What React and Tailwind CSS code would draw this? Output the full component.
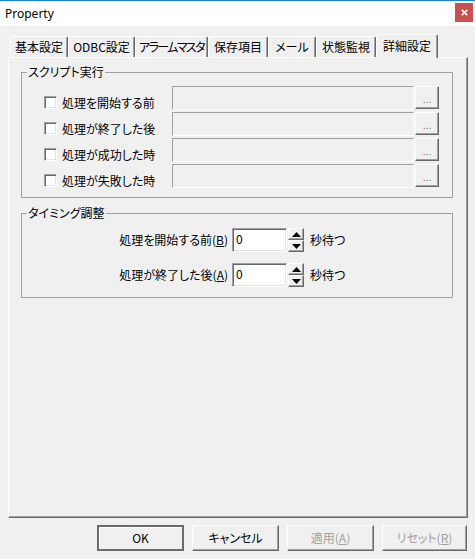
const raised =
  "border border-t-white border-l-white border-r-[#696969] border-b-[#696969] shadow-[inset_-1px_-1px_0_#a0a0a0]";
const sunken =
  "border border-t-[#a0a0a0] border-l-[#a0a0a0] border-r-white border-b-white shadow-[inset_1px_1px_0_#696969,inset_-1px_-1px_0_#e3e3e3]";

function Tab({ label, w, selected, tight }) {
  if (selected) {
    return (
      <div
        className={`${w} h-[24px] relative top-[1px] z-10 bg-[#f0f0f0] border-t border-l border-white border-r border-r-[#696969] shadow-[inset_-1px_0_0_#a0a0a0] rounded-t-[2px] flex items-center justify-center pb-[2px] shrink-0 whitespace-nowrap`}
      >
        {label}
      </div>
    );
  }
  return (
    <div
      className={`${w} h-[21px] bg-[#f0f0f0] border-t border-l border-white border-r border-r-[#696969] shadow-[inset_-1px_0_0_#a0a0a0] rounded-t-[2px] flex items-center justify-center shrink-0 whitespace-nowrap ${
        tight ? "tracking-[-1.6px]" : ""
      }`}
    >
      {label}
    </div>
  );
}

function ScriptRow({ label }) {
  return (
    <div className="flex items-start pl-[22px] h-[24px]">
      <div className="w-[128px] flex items-center gap-[5px] mt-[10px] h-[13px] shrink-0">
        <div className={`w-[13px] h-[13px] bg-white shrink-0 ${sunken}`} />
        <span className="whitespace-nowrap">{label}</span>
      </div>
      <div className="w-[242px] h-[24px] shrink-0 border border-t-[#a0a0a0] border-l-[#a0a0a0] border-r-white border-b-white" />
      <div
        className={`ml-[1px] w-[24px] h-[23px] shrink-0 flex items-center justify-center text-[#7a7a7a] text-[10px] leading-[10px] pt-[3px] ${raised}`}
      >
        ...
      </div>
    </div>
  );
}

function Spin() {
  return (
    <div className="ml-[1px] w-[16px] h-[24px] flex flex-col shrink-0">
      <div className={`h-[12px] flex items-center justify-center ${raised}`}>
        <svg width="9" height="5" viewBox="0 0 9 5">
          <path d="M4.5 0L9 5H0Z" fill="#000" />
        </svg>
      </div>
      <div className={`h-[12px] flex items-center justify-center ${raised}`}>
        <svg width="9" height="5" viewBox="0 0 9 5">
          <path d="M0 0H9L4.5 5Z" fill="#000" />
        </svg>
      </div>
    </div>
  );
}

function TimingRow({ label, acc }) {
  return (
    <div className="flex items-center h-[24px]">
      <div className="w-[206px] text-right whitespace-nowrap shrink-0">
        {label}(<u>{acc}</u>)
      </div>
      <div
        className={`ml-[4px] w-[55px] h-[24px] bg-white shrink-0 pl-[3px] pt-[3px] ${sunken}`}
      >
        0
      </div>
      <Spin />
      <span className="ml-[6px] whitespace-nowrap">秒待つ</span>
    </div>
  );
}

function DlgButton({ children, w, primary, disabled }) {
  const base = primary
    ? "border-2 border-[#6b6b6b] shadow-[inset_1px_1px_0_#fff]"
    : raised;
  return (
    <div
      className={`${w} h-[26px] flex items-center justify-center bg-[#f0f0f0] shrink-0 whitespace-nowrap ${base} ${
        disabled ? "text-[#a0a0a0]" : "text-black"
      }`}
    >
      {children}
    </div>
  );
}

export default function App() {
  return (
    <div className="w-[475px] h-[559px] bg-[#f0f0f0] flex flex-col overflow-hidden text-[12px] leading-[14px] text-black font-['Noto_Sans_CJK_JP','Noto_Sans',sans-serif] [font-feature-settings:'palt']">
      {/* Title bar */}
      <div className="h-[26px] shrink-0 bg-white border-t border-[#1a7fd4] flex items-start justify-between">
        <span className="self-center ml-[5px] font-['Noto_Sans',sans-serif] text-[12px]">
          Property
        </span>
        <div className="mt-[2px] mr-[2px] w-[18px] h-[19px] bg-[#c75050] flex items-center justify-center">
          <svg width="7" height="7" viewBox="0 0 7 7">
            <path d="M0.8 0.8L6.2 6.2M6.2 0.8L0.8 6.2" stroke="#fff" strokeWidth="1.7" />
          </svg>
        </div>
      </div>

      {/* Tabs */}
      <div className="mt-[8px] h-[23px] pl-[10px] flex items-end shrink-0">
        <Tab label="基本設定" w="w-[58px]" />
        <Tab label="ODBC設定" w="w-[67px]" />
        <Tab label="アラームマスタ" w="w-[73px]" tight />
        <Tab label="保存項目" w="w-[60px]" />
        <Tab label="メール" w="w-[48px]" />
        <Tab label="状態監視" w="w-[60px]" />
        <Tab label="詳細設定" w="w-[62px]" selected />
      </div>

      {/* Panel */}
      <div className="ml-[8px] mr-[7px] flex-1 border-t border-l border-white border-r border-b border-r-[#696969] border-b-[#696969] shadow-[inset_-1px_-1px_0_#a0a0a0] flex flex-col">
        <fieldset className="mt-[7px] ml-[12px] mr-[14px] border border-[#a0a0a0] pb-[9px]">
          <legend className="ml-[5px] px-[1px] leading-[14px]">スクリプト実行</legend>
          <div className="mt-[7px] flex flex-col gap-[2px]">
            <ScriptRow label="処理を開始する前" />
            <ScriptRow label="処理が終了した後" />
            <ScriptRow label="処理が成功した時" />
            <ScriptRow label="処理が失敗した時" />
          </div>
        </fieldset>

        <fieldset className="mt-[8px] ml-[12px] mr-[14px] border border-[#a0a0a0] pb-[10px]">
          <legend className="ml-[5px] px-[1px] leading-[14px]">タイミング調整</legend>
          <div className="mt-[8px] flex flex-col gap-[11px]">
            <TimingRow label="処理を開始する前" acc="B" />
            <TimingRow label="処理が終了した後" acc="A" />
          </div>
        </fieldset>
      </div>

      {/* Buttons */}
      <div className="mt-[7px] mb-[8px] pr-[8px] flex justify-end gap-[8px] shrink-0">
        <DlgButton w="w-[87px]" primary>
          OK
        </DlgButton>
        <DlgButton w="w-[87px]">キャンセル</DlgButton>
        <DlgButton w="w-[87px]" disabled>
          適用(<u>A</u>)
        </DlgButton>
        <DlgButton w="w-[85px]" disabled>
          リセット(<u>R</u>)
        </DlgButton>
      </div>
    </div>
  );
}
